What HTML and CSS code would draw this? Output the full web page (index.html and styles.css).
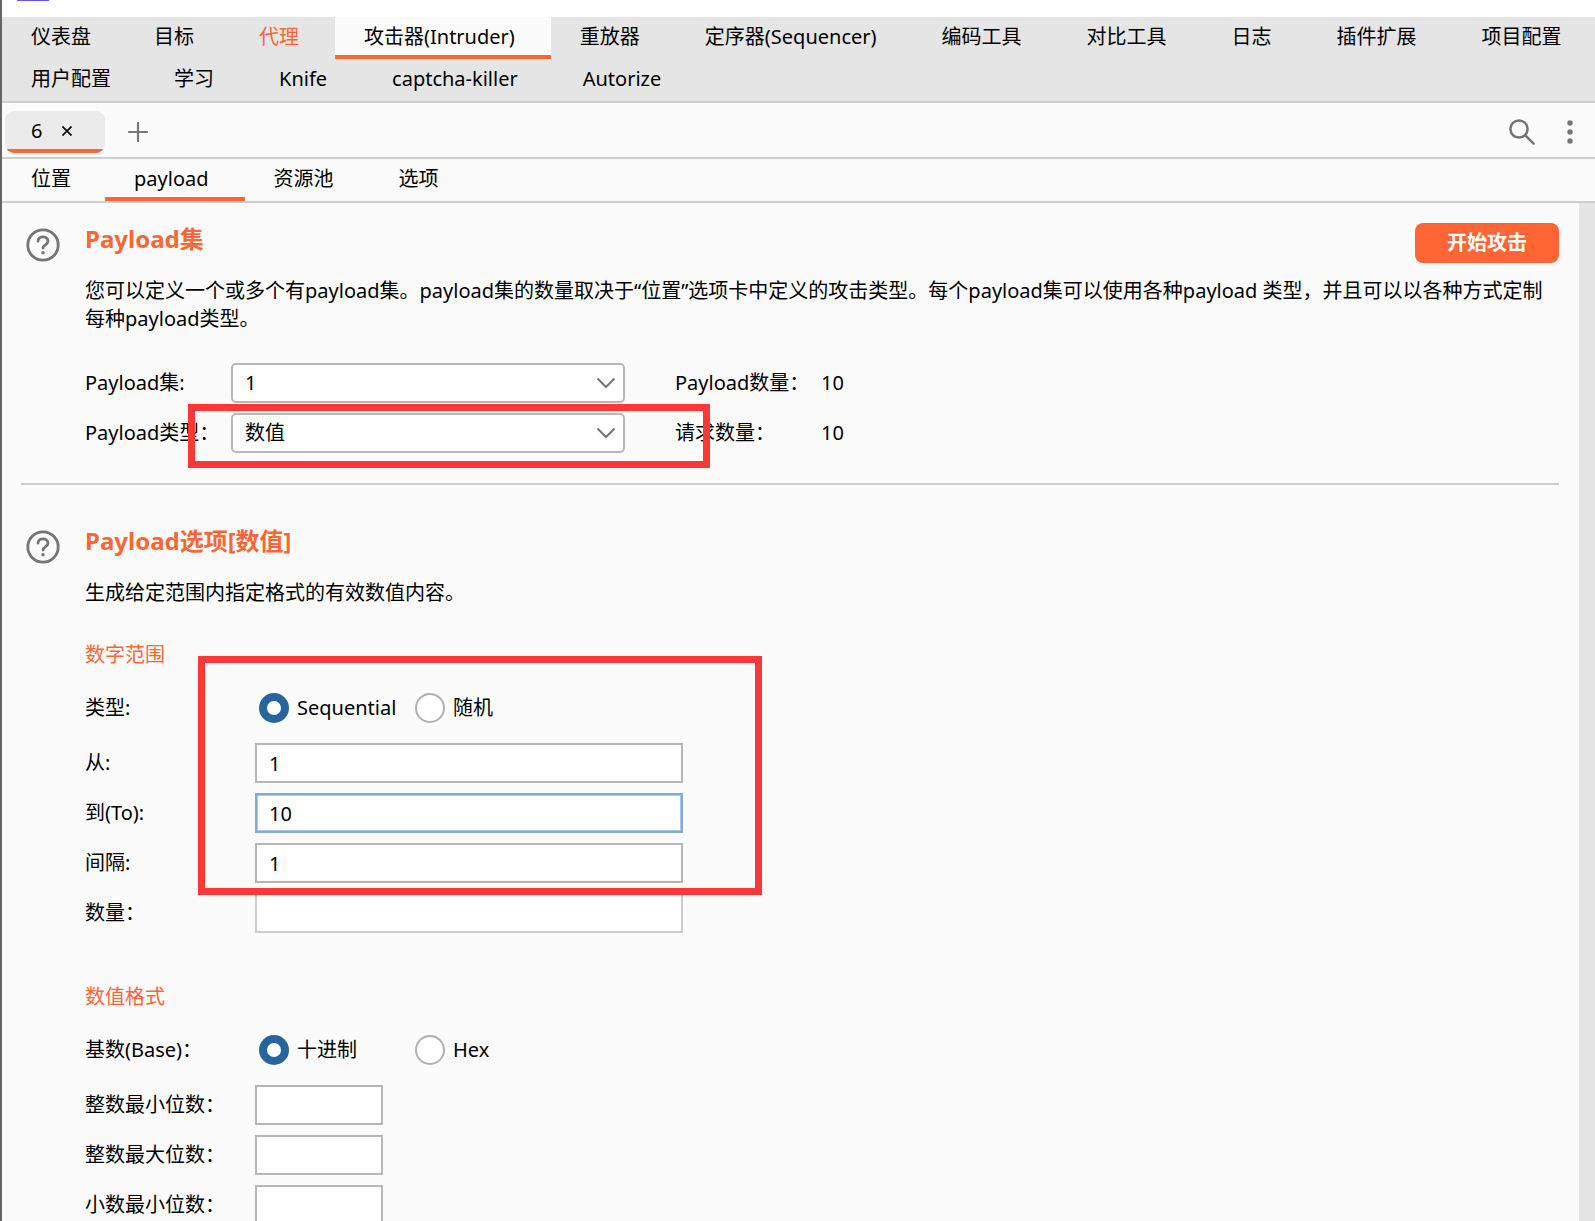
FILE: index.html
```html
<!DOCTYPE html>
<html lang="zh-CN">
<head>
<meta charset="utf-8">
<title>Intruder - payload</title>
<link rel="stylesheet" href="styles.css">
</head>
<body>
<div class="app">
  <div class="titlebar"><span class="titlebar-mark"></span></div>

  <nav class="main-tabs">
    <div class="tab-row">
      <button class="tab">仪表盘</button>
      <button class="tab">目标</button>
      <button class="tab tab-alert">代理</button>
      <button class="tab tab-active">攻击器(Intruder)</button>
      <button class="tab">重放器</button>
      <button class="tab">定序器(Sequencer)</button>
      <button class="tab">编码工具</button>
      <button class="tab">对比工具</button>
      <button class="tab">日志</button>
      <button class="tab">插件扩展</button>
      <button class="tab">项目配置</button>
    </div>
    <div class="tab-row">
      <button class="tab">用户配置</button>
      <button class="tab">学习</button>
      <button class="tab">Knife</button>
      <button class="tab">captcha-killer</button>
      <button class="tab">Autorize</button>
    </div>
  </nav>

  <div class="attack-bar">
    <button class="attack-tab">6
      <svg width="10" height="10" viewBox="0 0 10 10"><path d="M0.5 0.5 L9.5 9.5 M9.5 0.5 L0.5 9.5" stroke="#000" stroke-width="1.6"/></svg>
    </button>
    <button class="icon-button" aria-label="新建">
      <svg width="20" height="20" viewBox="0 0 20 20"><path d="M10 1V19M1 10H19" stroke="#777" stroke-width="2.2" stroke-linecap="round"/></svg>
    </button>
    <div class="attack-tools">
      <button class="icon-button" aria-label="搜索">
        <svg width="26" height="26" viewBox="0 0 26 26" fill="none" stroke="#757575" stroke-width="2.5" stroke-linecap="round"><circle cx="10" cy="10" r="8.6"/><path d="M16.3 16.3L24.6 24.6"/></svg>
      </button>
      <button class="icon-button" aria-label="更多">
        <svg width="6" height="24" viewBox="0 0 6 24" fill="#757575"><circle cx="3" cy="3" r="2.7"/><circle cx="3" cy="12" r="2.7"/><circle cx="3" cy="21" r="2.7"/></svg>
      </button>
    </div>
  </div>

  <nav class="sub-tabs tab-row">
    <button class="tab">位置</button>
    <button class="tab tab-active">payload</button>
    <button class="tab">资源池</button>
    <button class="tab">选项</button>
  </nav>

  <div class="viewport">
    <main class="content">
      <section class="panel">
        <div class="marker marker-type"></div>
        <button class="icon-button help" aria-label="帮助">
          <svg width="34" height="34" viewBox="0 0 34 34" fill="none" stroke="#757575" stroke-width="2.8"><circle cx="17" cy="17" r="15.2"/><path d="M12 13.2C12 7.4 22 7.4 22 13.1C22 16.9 17 16.8 17 20" stroke-linecap="round"/><circle cx="17" cy="24.8" r="1.7" fill="#757575" stroke="none"/></svg>
        </button>
        <div class="panel-body">
          <div class="panel-head">
            <h2>Payload集</h2>
            <button class="start">开始攻击</button>
          </div>
          <p>您可以定义一个或多个有payload集。payload集的数量取决于“位置”选项卡中定义的攻击类型。每个payload集可以使用各种payload 类型，并且可以以各种方式定制每种payload类型。</p>
          <div class="set-grid">
            <label for="set">Payload集:</label>
            <div class="combo">
              <select id="set"><option>1</option></select>
              <svg width="20" height="12" viewBox="0 0 20 12"><path d="M1.5 1.5L10 10L18.5 1.5" fill="none" stroke="#757575" stroke-width="2"/></svg>
            </div>
            <span class="count-label">Payload数量：</span><span>10</span>
            <label for="type">Payload类型：</label>
            <div class="combo">
              <select id="type"><option>数值</option></select>
              <svg width="20" height="12" viewBox="0 0 20 12"><path d="M1.5 1.5L10 10L18.5 1.5" fill="none" stroke="#757575" stroke-width="2"/></svg>
            </div>
            <span class="count-label">请求数量：</span><span>10</span>
          </div>
        </div>
      </section>

      <hr>

      <section class="panel">
        <div class="marker marker-range"></div>
        <button class="icon-button help" aria-label="帮助">
          <svg width="34" height="34" viewBox="0 0 34 34" fill="none" stroke="#757575" stroke-width="2.8"><circle cx="17" cy="17" r="15.2"/><path d="M12 13.2C12 7.4 22 7.4 22 13.1C22 16.9 17 16.8 17 20" stroke-linecap="round"/><circle cx="17" cy="24.8" r="1.7" fill="#757575" stroke="none"/></svg>
        </button>
        <div class="panel-body">
          <div class="panel-head"><h2>Payload选项[数值]</h2></div>
          <p>生成给定范围内指定格式的有效数值内容。</p>

          <h3>数字范围</h3>
          <div class="form-grid">
            <span>类型:</span>
            <div class="radios">
              <label><input type="radio" name="order" checked>Sequential</label>
              <label><input type="radio" name="order">随机</label>
            </div>
            <label for="from">从:</label><input class="field" id="from" type="text" value="1">
            <label for="to">到(To):</label><input class="field field-focus" id="to" type="text" value="10">
            <label for="step">间隔:</label><input class="field" id="step" type="text" value="1">
            <label for="many">数量：</label><input class="field" id="many" type="text" disabled>
          </div>

          <h3>数值格式</h3>
          <div class="form-grid">
            <span>基数(Base)：</span>
            <div class="radios">
              <label><input type="radio" name="base" checked>十进制</label>
              <label><input type="radio" name="base">Hex</label>
            </div>
            <label for="min-int">整数最小位数：</label><input class="field field-short" id="min-int" type="text">
            <label for="max-int">整数最大位数：</label><input class="field field-short" id="max-int" type="text">
            <label for="min-frac">小数最小位数：</label><input class="field field-short" id="min-frac" type="text">
          </div>
        </div>
      </section>
    </main>
    <div class="scroll-track"></div>
  </div>
</div>
</body>
</html>
```
FILE: styles.css
```css
* {
  box-sizing: border-box;
}

body {
  margin: 0;
  font: 20px/28px "Noto Sans", "Noto Sans CJK SC", sans-serif;
  color: #000;
  background: #fbfbfb;
}

button,
input,
select {
  font: inherit;
  color: inherit;
}

button {
  margin: 0;
  padding: 0;
  border: 0;
  background: none;
}

svg {
  display: block;
}

.app {
  display: flex;
  flex-direction: column;
  height: 100vh;
  overflow: hidden;
  border-left: 2px solid #666;
}

.titlebar {
  flex: none;
  height: 17px;
  padding-left: 15px;
  background: #fff;
}

.titlebar-mark {
  display: block;
  width: 32px;
  height: 1px;
  background: #6252f0;
}

/* Tabs */
.main-tabs {
  flex: none;
  background: #e5e5e5;
  border-bottom: 2px solid #cbd0ce;
}

.tab-row {
  display: flex;
}

.tab {
  flex: none;
  height: 42px;
  padding: 0 36px 2px 29px;
  white-space: nowrap;
}

.tab:first-child {
  padding-right: 34px;
}

.tab:last-child {
  padding-right: 0;
}

.tab-alert {
  color: #ff6633;
}

.tab-active {
  padding-top: 2px;
  padding-bottom: 0;
  background: #fbfbfb;
  border-bottom: 4px solid #ff6633;
}

.sub-tabs {
  flex: none;
  border-bottom: 2px solid #cbd0ce;
}

/* Attack tabs */
.attack-bar {
  display: flex;
  flex: none;
  align-items: center;
  height: 56px;
  padding: 4px 22px 0 3px;
  border-bottom: 2px solid #cbd0ce;
}

.attack-tab {
  display: flex;
  align-items: center;
  gap: 20px;
  width: 100px;
  height: 42px;
  margin-right: 23px;
  padding: 0 0 2px 26px;
  background: linear-gradient(#ebebeb 38px, #ff6633 38px);
  border-radius: 9px;
}

.attack-tools {
  display: flex;
  align-items: center;
  gap: 32px;
  margin-left: auto;
}

/* Scrolling pane */
.viewport {
  display: flex;
  flex: 1;
  min-height: 0;
}

.content {
  flex: 1;
  min-width: 0;
  overflow: hidden;
  padding: 20px 20px 0 19px;
}

.scroll-track {
  width: 16px;
  background: #e5e5e5;
}

.panel {
  position: relative;
  display: flex;
  gap: 25px;
  padding-left: 5px;
}

.help {
  align-self: flex-start;
  margin-top: 5px;
}

.panel-body {
  flex: 1;
  min-width: 0;
}

.panel-head {
  display: flex;
  justify-content: space-between;
  height: 40px;
}

h2 {
  margin: 0;
  font-size: 24px;
  line-height: 32px;
  color: #ff6633;
}

h3 {
  margin: 0;
  padding: 34px 0 14px;
  font-size: 20px;
  font-weight: 400;
  line-height: 28px;
  color: #ff6633;
}

p {
  margin: 14px 0 0;
}

.start {
  width: 144px;
  height: 40px;
  border-radius: 8px;
  background: #ff6633;
  color: #fff;
  font-weight: 700;
}

hr {
  height: 2px;
  margin: 30px 0 40px;
  border: 0;
  background: #cdcdcd;
}

.set-grid {
  display: grid;
  grid-template-columns: 146px 394px 196px auto;
  grid-auto-rows: 40px;
  row-gap: 10px;
  align-items: center;
  padding-top: 30px;
}

.count-label {
  padding-left: 50px;
}

.combo {
  display: grid;
  align-items: center;
}

.combo > * {
  grid-area: 1 / 1;
}

.combo select {
  width: 100%;
  height: 40px;
  padding: 0 12px;
  appearance: none;
  background: #fff;
  border: 2px solid #bab5b7;
  border-radius: 5px;
}

.combo svg {
  justify-self: end;
  margin-right: 9px;
  pointer-events: none;
}

.form-grid {
  display: grid;
  grid-template-columns: 170px 428px;
  row-gap: 10px;
  align-items: center;
}

.form-grid + h3 {
  padding-top: 50px;
}

.radios {
  display: grid;
  grid-template-columns: 156px auto;
  align-items: center;
  height: 50px;
  padding-left: 4px;
}

.radios label {
  display: flex;
  gap: 8px;
  align-items: center;
}

.radios input {
  width: 30px;
  height: 30px;
  margin: 0;
  appearance: none;
  background: #fff;
  border: 2px solid #b0b0b0;
  border-radius: 50%;
}

.radios input:checked {
  border: 8px solid #27659f;
}

.field {
  width: 100%;
  height: 40px;
  padding: 0 12px;
  background: #fff;
  border: 2px solid #bab5b7;
  border-radius: 0;
}

.field:disabled {
  border-color: #cdcdcd;
}

.field-focus {
  border-color: #82abd9;
  box-shadow: inset 0 0 0 1px #a5c8f0;
}

.field-short {
  width: 128px;
}

/* Red annotation frames lying over the form */
.marker {
  position: absolute;
  z-index: 1;
  border: 7px solid #fb3838;
  pointer-events: none;
}

.marker-type {
  top: 181px;
  left: 167px;
  width: 522px;
  height: 64px;
}

.marker-range {
  top: 131px;
  left: 177px;
  width: 564px;
  height: 239px;
}
```
